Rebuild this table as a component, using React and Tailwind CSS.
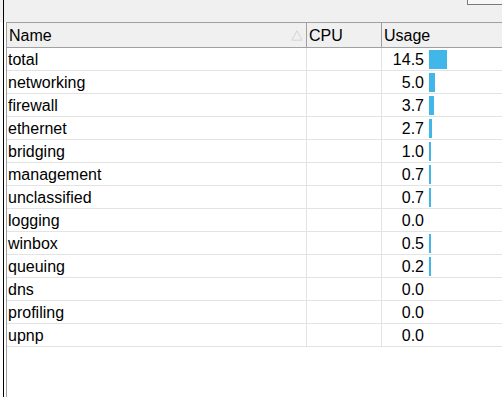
import React from "react";

const ROWS = [
  { name: "total", cpu: "", usage: 14.5 },
  { name: "networking", cpu: "", usage: 5.0 },
  { name: "firewall", cpu: "", usage: 3.7 },
  { name: "ethernet", cpu: "", usage: 2.7 },
  { name: "bridging", cpu: "", usage: 1.0 },
  { name: "management", cpu: "", usage: 0.7 },
  { name: "unclassified", cpu: "", usage: 0.7 },
  { name: "logging", cpu: "", usage: 0.0 },
  { name: "winbox", cpu: "", usage: 0.5 },
  { name: "queuing", cpu: "", usage: 0.2 },
  { name: "dns", cpu: "", usage: 0.0 },
  { name: "profiling", cpu: "", usage: 0.0 },
  { name: "upnp", cpu: "", usage: 0.0 },
];

// bar grows with the usage value, thin sliver for anything above zero
const barWidth = (v) => (v > 0 ? Math.max(2, Math.round(v * 1.22)) : 0);

function SortArrow() {
  return (
    <svg width="12" height="11" viewBox="0 0 12 11" className="shrink-0">
      <path d="M6 0.8 L11.2 10.2 L0.8 10.2 Z" fill="none" stroke="#d4d4d4" strokeWidth="1" />
    </svg>
  );
}

function UsageCell({ value }) {
  const w = barWidth(value);
  return (
    <div className="flex items-start h-full">
      <span className="w-[42px] text-right self-center pt-[2px]">{value.toFixed(1)}</span>
      {w > 0 && (
        <span
          className="ml-[5px] mt-[2px] h-[19px] bg-[#41b6e8]"
          style={{ width: `${w}px` }}
        />
      )}
    </div>
  );
}

export default function App() {
  return (
    <div
      className="w-[502px] h-[397px] flex bg-white overflow-hidden text-black text-[16px] leading-none"
      style={{ fontFamily: '"Liberation Sans", Arial, sans-serif' }}
    >
      {/* neighbouring pane edge */}
      <div className="w-[3px] flex flex-col">
        <div className="h-[22px] bg-[#f0f0f0]" />
      </div>
      <div className="w-px bg-black" />

      <div className="flex-1 flex flex-col min-w-0">
        {/* toolbar strip */}
        <div className="h-[22px] shrink-0 bg-[#f0f0f0] flex justify-end items-start">
          <div className="w-[35px] h-[5px] border-l border-b border-[#7a7a7a] bg-[#f7f7f7]" />
        </div>

        <div className="flex-1 flex min-h-0">
          <div className="w-[2px] shrink-0" />
          <div className="flex-1 border-l border-[#a0a0a0] flex flex-col min-w-0">
            {/* header */}
            <div className="h-[26px] shrink-0 flex bg-[#f0f0f0] border-t border-b border-[#a0a0a0]">
              <div className="w-[300px] shrink-0 flex items-center justify-between pl-[2px] pr-[3px] border-r border-[#a0a0a0]">
                <span className="pt-[2px]">Name</span>
                <SortArrow />
              </div>
              <div className="w-[75px] shrink-0 flex items-center pl-[2px] pt-[2px] border-r border-[#a0a0a0]">
                CPU
              </div>
              <div className="flex-1 flex items-center pl-[2px] pt-[2px]">Usage</div>
            </div>

            {/* body */}
            <div className="flex flex-col">
              {ROWS.map((row, i) => (
                <div key={i} className="h-[23px] flex border-b border-[#e3e3e3]">
                  <div className="w-[300px] shrink-0 flex items-center pl-[1px] pt-[2px] border-r border-[#e3e3e3]">
                    {row.name}
                  </div>
                  <div className="w-[75px] shrink-0 flex items-center border-r border-[#e3e3e3]">
                    {row.cpu}
                  </div>
                  <div className="flex-1">
                    <UsageCell value={row.usage} />
                  </div>
                </div>
              ))}
            </div>
          </div>
        </div>
      </div>
    </div>
  );
}
